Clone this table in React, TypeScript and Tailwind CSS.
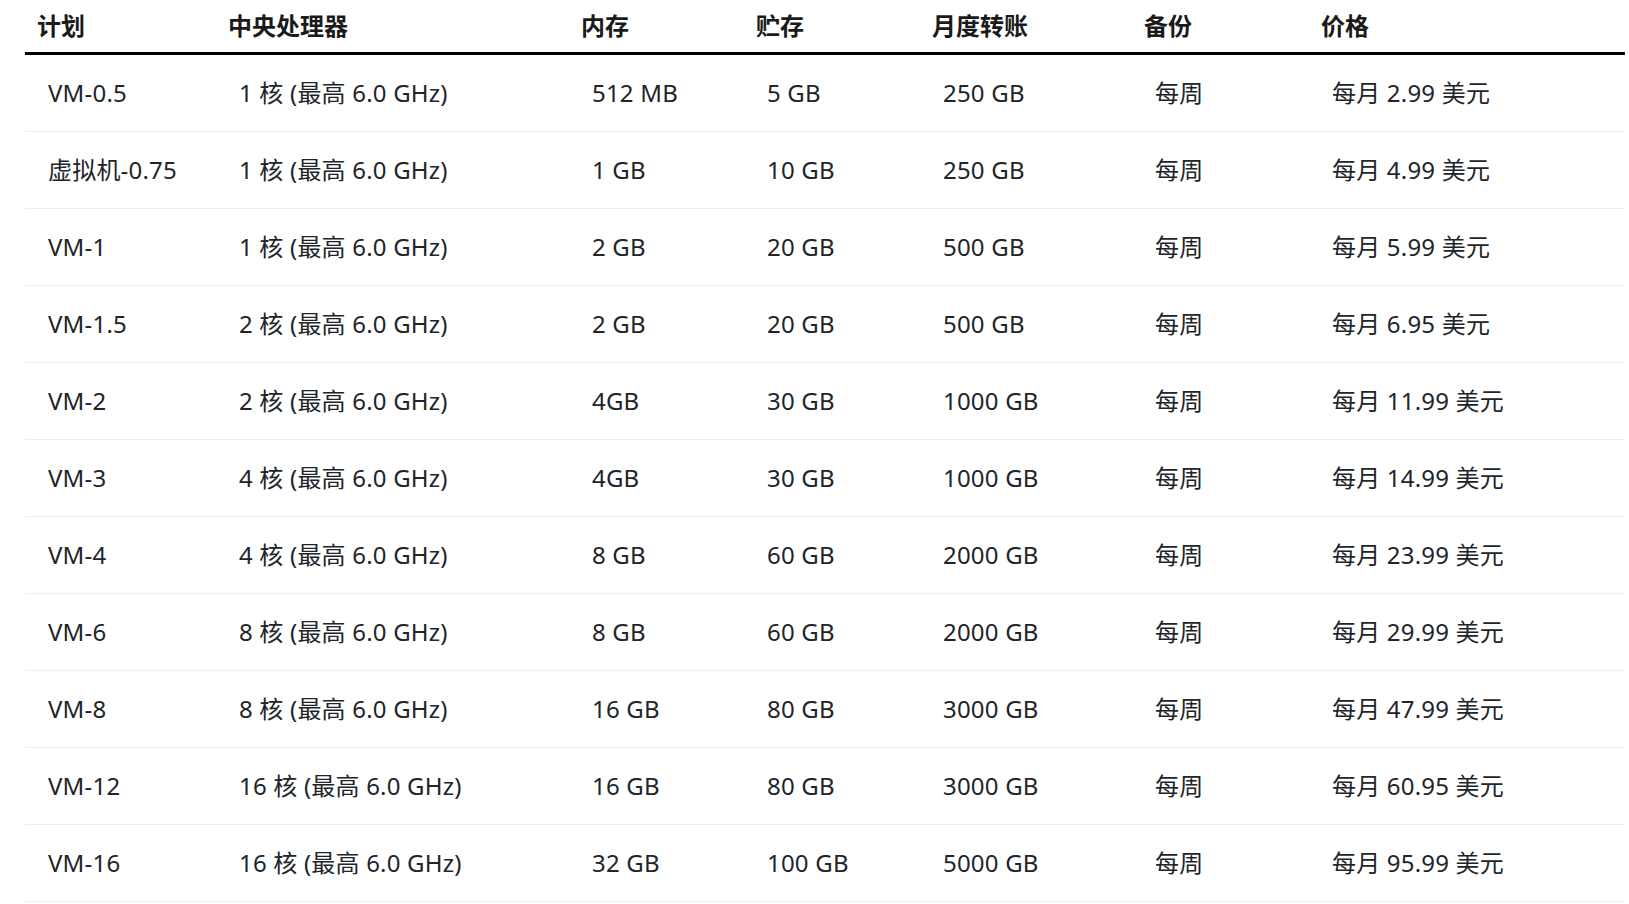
import React from "react";

const headers = ["计划", "中央处理器", "内存", "贮存", "月度转账", "备份", "价格"];

const rows: string[][] = [
  ["VM-0.5", "1 核 (最高 6.0 GHz)", "512 MB", "5 GB", "250 GB", "每周", "每月 2.99 美元"],
  ["虚拟机-0.75", "1 核 (最高 6.0 GHz)", "1 GB", "10 GB", "250 GB", "每周", "每月 4.99 美元"],
  ["VM-1", "1 核 (最高 6.0 GHz)", "2 GB", "20 GB", "500 GB", "每周", "每月 5.99 美元"],
  ["VM-1.5", "2 核 (最高 6.0 GHz)", "2 GB", "20 GB", "500 GB", "每周", "每月 6.95 美元"],
  ["VM-2", "2 核 (最高 6.0 GHz)", "4GB", "30 GB", "1000 GB", "每周", "每月 11.99 美元"],
  ["VM-3", "4 核 (最高 6.0 GHz)", "4GB", "30 GB", "1000 GB", "每周", "每月 14.99 美元"],
  ["VM-4", "4 核 (最高 6.0 GHz)", "8 GB", "60 GB", "2000 GB", "每周", "每月 23.99 美元"],
  ["VM-6", "8 核 (最高 6.0 GHz)", "8 GB", "60 GB", "2000 GB", "每周", "每月 29.99 美元"],
  ["VM-8", "8 核 (最高 6.0 GHz)", "16 GB", "80 GB", "3000 GB", "每周", "每月 47.99 美元"],
  ["VM-12", "16 核 (最高 6.0 GHz)", "16 GB", "80 GB", "3000 GB", "每周", "每月 60.95 美元"],
  ["VM-16", "16 核 (最高 6.0 GHz)", "32 GB", "100 GB", "5000 GB", "每周", "每月 95.99 美元"],
];

const grid = "grid grid-cols-[191px_353px_175px_176px_212px_177px_316px]";

export default function App() {
  return (
    <div
      className="bg-white min-h-screen pl-[25px] text-[#212529]"
      style={{ fontFamily: '"Noto Sans", "Noto Sans CJK SC", sans-serif' }}
    >
      <div className="w-[1600px]">
        <div className={`${grid} h-[55px] items-center border-b-[3px] border-black`}>
          {headers.map((h) => (
            <div key={h} className="pl-[12px] text-[24px] font-bold text-[#1a1a1a] leading-none">
              {h}
            </div>
          ))}
        </div>
        {rows.map((r, i) => (
          <div key={i} className={`${grid} h-[77px] items-center border-b border-[#e6eef7]`}>
            {r.map((c, j) => (
              <div key={j} className="pl-[23px] text-[24px] tracking-[0.2px] leading-none whitespace-nowrap">
                {c}
              </div>
            ))}
          </div>
        ))}
      </div>
    </div>
  );
}
